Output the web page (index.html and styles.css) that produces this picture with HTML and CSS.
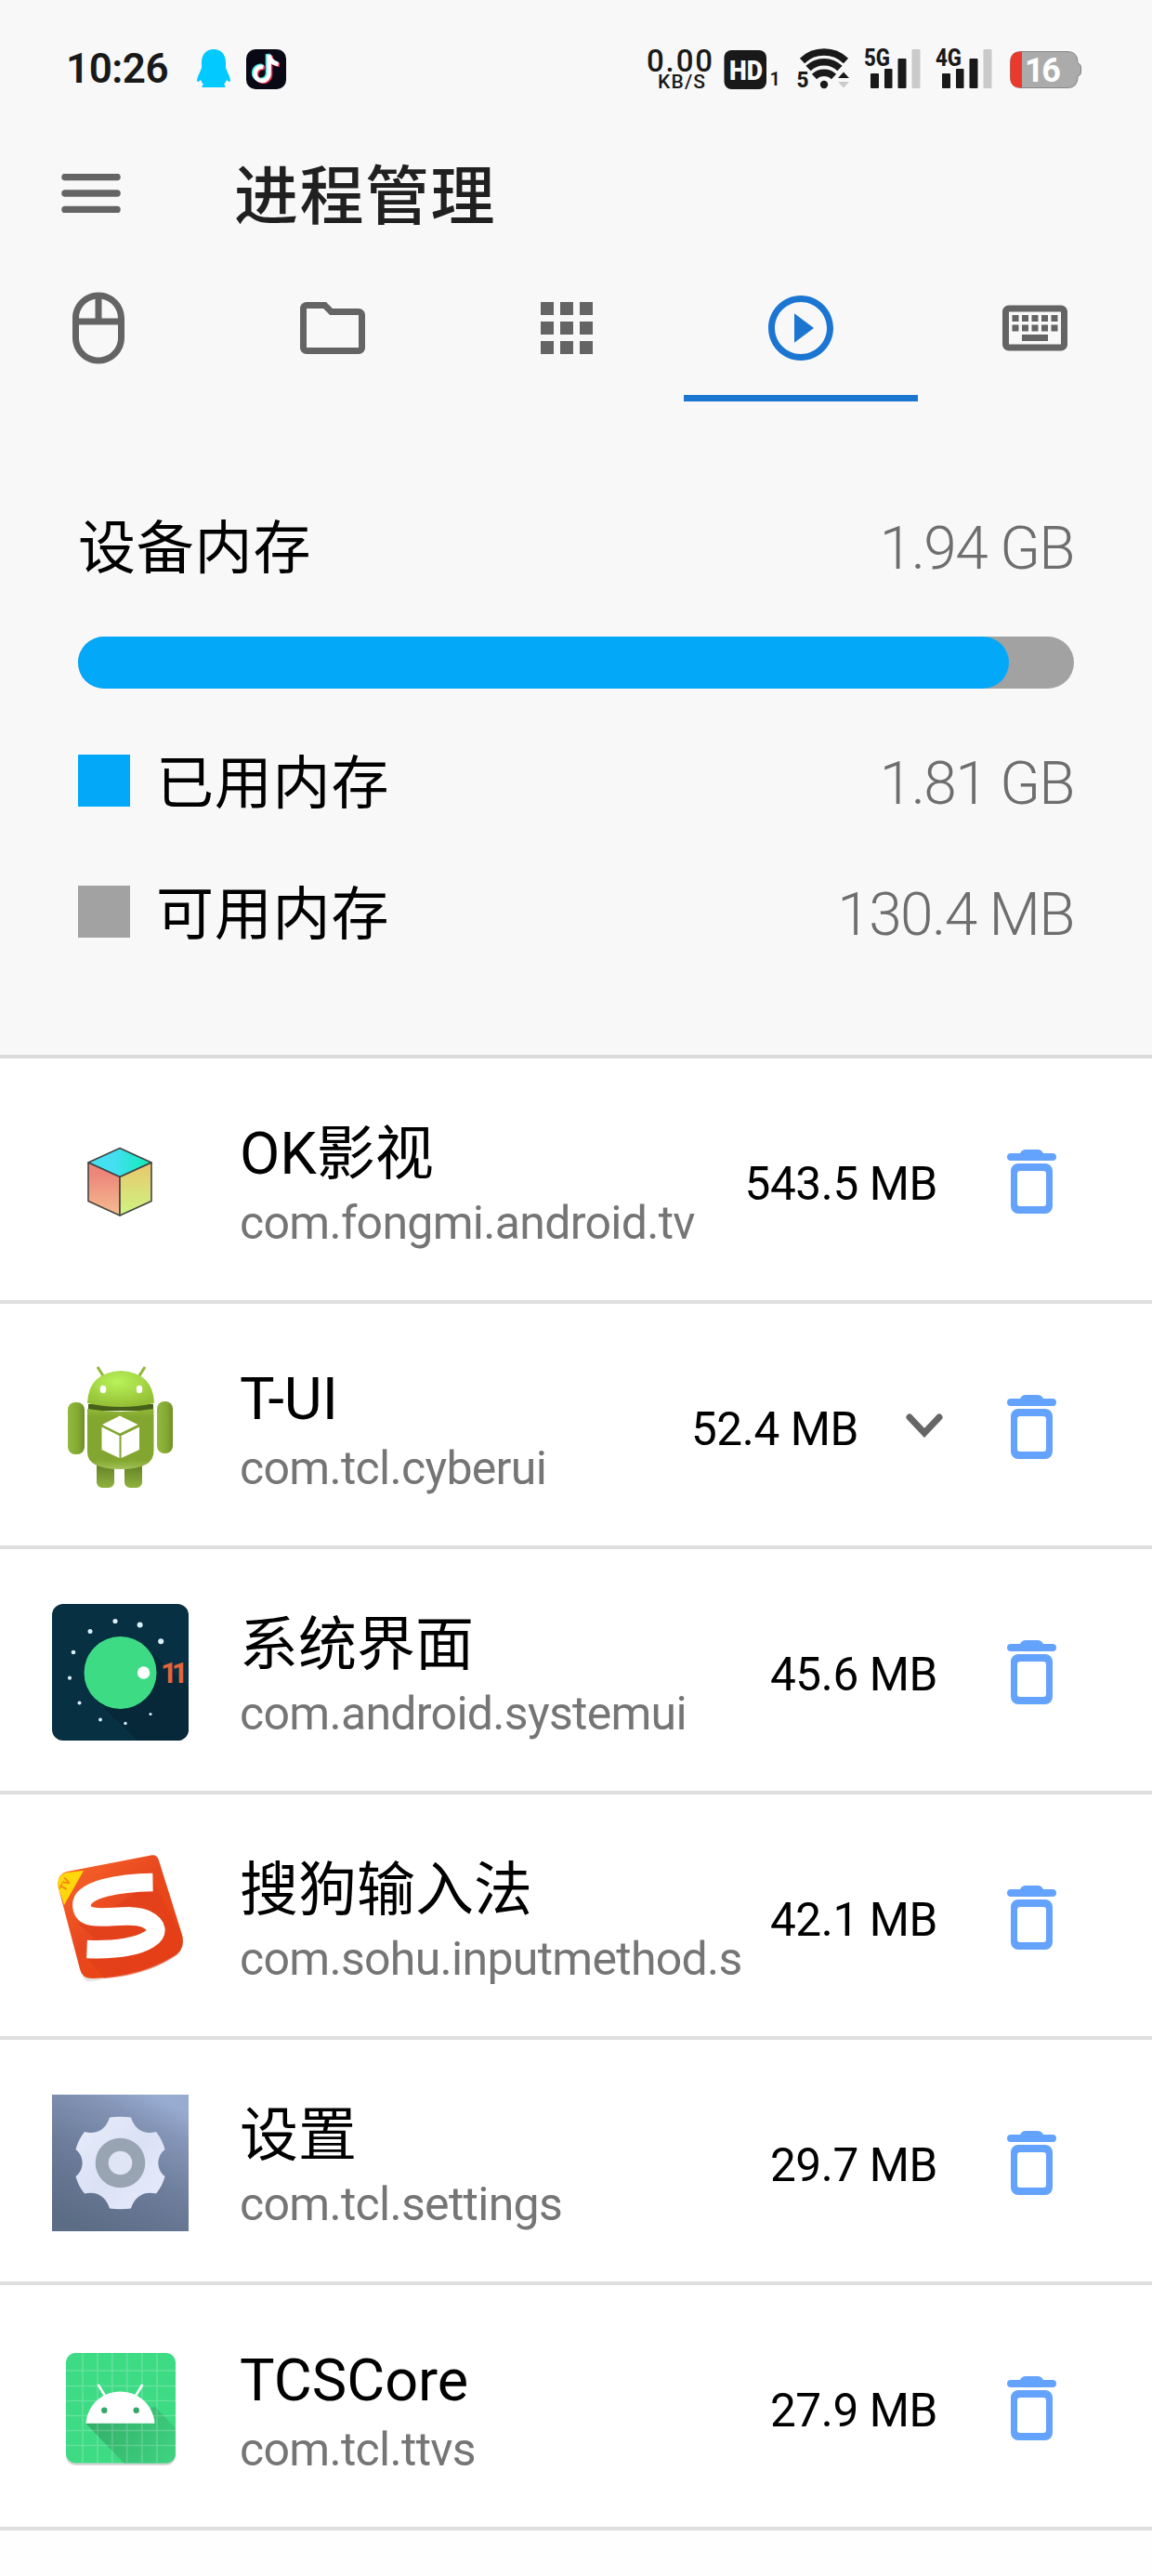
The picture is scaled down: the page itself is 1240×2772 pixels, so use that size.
FILE: index.html
```html
<!DOCTYPE html>
<html lang="zh-CN">
<head>
    <meta charset="UTF-8">
    <title>进程管理</title>

    <link rel="stylesheet" href="styles.css">
</head>

<body>
<svg class="defs" width="0" height="0">
    <symbol id="trash" viewBox="0 0 53 69">
        <path d="M4 4h10q2-4 6-4h13q4 0 6 4h10a4 4 0 0 1 0 8H4a4 4 0 0 1 0-8z"/>
        <path fill-rule="evenodd" d="M12 15h29a8 8 0 0 1 8 8v38a8 8 0 0 1-8 8H12a8 8 0 0 1-8-8V23a8 8 0 0 1 8-8zm2 8a3 3 0 0 0-3 3v32a3 3 0 0 0 3 3h25a3 3 0 0 0 3-3V26a3 3 0 0 0-3-3z"/>
    </symbol>
</svg>

<div class="status-bar">
    <div class="status-left">
        <span class="time">10:26</span>
        <svg class="qq" width="36" height="42" viewBox="0 0 36 42">
            <path fill="#02c9ff" d="M18 0c8 0 13 6 13 14v6l2 5c2 4 3 7 3 9-1 2-3 0-4-1-1 2-2 4-3 5 2 1 2 3 1 3H6c-1 0-1-2 1-3-1-1-2-3-3-5-1 1-3 3-4 1 0-2 1-5 3-9l2-5v-6C5 6 10 0 18 0z"/>
        </svg>
        <svg class="tiktok" width="43" height="43" viewBox="0 0 43 43">
            <rect width="43" height="43" rx="10" fill="#090915"/>
            <g fill="none" stroke-width="4.6">
                <path stroke="#3de0e0" d="M23 5v21a7.500 7.500 0 1 1-6-8M23 5c1 6 4 9 10 10"/>
                <path stroke="#f0355c" d="M26 7v21a7.500 7.500 0 1 1-6-8M26 7c1 6 4 9 10 10"/>
                <path stroke="#fff" d="M24.500 6v21a7.500 7.500 0 1 1-6-8M24.500 6c1 6 4 9 10 10"/>
            </g>
        </svg>
    </div>
    <svg class="status-right" width="470" height="60" viewBox="694 44 470 60">
        <g fill="#191919">
            <text x="696" y="77" font-size="33" font-weight="500" textLength="71">0.00</text>
            <text x="708" y="95" font-size="21" font-weight="500" textLength="51">KB/S</text>
            <rect x="779.500" y="54" width="45.500" height="42" rx="8"/>
            <text x="785" y="86" font-size="30" font-weight="900" fill="#f8f8f8" textLength="36" lengthAdjust="spacingAndGlyphs">HD</text>
            <text x="828.500" y="92" font-size="20" font-weight="600">1</text>
            <!-- wifi -->
            <g fill="none" stroke="#191919" stroke-width="7.500">
                <path d="M863.500 65.500a34 34 0 0 1 47 0"/>
                <path d="M870 73.500a24.500 24.500 0 0 1 34 0"/>
                <path d="M876.500 82.500a15 15 0 0 1 21 0"/>
            </g>
            <circle cx="887" cy="91" r="4.200"/>
            <text x="857.500" y="94" font-size="24" font-weight="800" textLength="13" lengthAdjust="spacingAndGlyphs">5</text>
            <path d="M902 84l6-6.500 6 6.500z"/>
            <path fill="#cacaca" d="M902 88l6 6.500 6-6.500z"/>
            <!-- sim 1 -->
            <text x="930" y="71" font-size="25.500" font-weight="800" textLength="28" lengthAdjust="spacingAndGlyphs">5G</text>
            <rect x="937" y="79" width="9" height="16" rx="1"/>
            <rect x="952" y="74" width="8.500" height="21" rx="1"/>
            <rect x="966.500" y="63" width="9" height="32" rx="1"/>
            <rect x="981.500" y="53" width="9" height="42" rx="1" fill="#cacaca"/>
            <!-- sim 2 -->
            <text x="1007" y="71" font-size="25.500" font-weight="800" textLength="28" lengthAdjust="spacingAndGlyphs">4G</text>
            <rect x="1014" y="79" width="9" height="16" rx="1"/>
            <rect x="1029" y="74" width="8.500" height="21" rx="1"/>
            <rect x="1043.500" y="63" width="9" height="32" rx="1"/>
            <rect x="1058.500" y="53" width="9" height="42" rx="1" fill="#cacaca"/>
        </g>
        <!-- battery -->
        <path fill="#ababab" stroke="#858585" d="M1099 55.500h50q10 0 11 10v2.500q3.500 1 3.500 4v6q0 3-3.500 4v2.500q-1 10-11 10h-50q-11.500 0-11.500-11.500v-16q0-11.500 11.500-11.500z"/>
        <path fill="#ea3a2d" d="M1100 55.500h-1q-11.500 0-11.500 11.500v16q0 11.500 11.500 11.500h1z"/>
        <text x="1103" y="88" font-size="36" font-weight="700" fill="#fff" textLength="39">16</text>
    </svg>
</div>

<div class="title-bar">
    <svg class="menu" width="64" height="42" viewBox="0 0 64 42">
        <path fill="none" stroke="#646464" stroke-width="7.500" stroke-linecap="round" d="M4 3.500h56M4 21h56M4 38.500h56"/>
    </svg>
    <h1>进程管理</h1>
</div>

<div class="tabs">
    <div class="tab">
        <svg viewBox="0 0 24 24"><path d="M12 1C7.580 1 4 4.580 4 9v6c0 4.420 3.580 8 8 8s8-3.580 8-8V9c0-4.420-3.580-8-8-8zm6 8h-5V3.100c2.800.5 5 2.900 5 5.900zm-7-5.900V9H6c0-3 2.200-5.400 5-5.900zM18 15c0 3.310-2.690 6-6 6s-6-2.690-6-6v-4h12z"/></svg>
    </div>
    <div class="tab">
        <svg viewBox="0 0 24 24"><path d="M9.170 6l2 2H20v10H4V6h5.170M10 4H4c-1.100 0-1.990.9-1.990 2L2 18c0 1.100.9 2 2 2h16c1.100 0 2-.9 2-2V8c0-1.100-.9-2-2-2h-8l-2-2z"/></svg>
    </div>
    <div class="tab">
        <svg viewBox="0 0 24 24"><path d="M4 8h4V4H4zm6 12h4v-4h-4zm-6 0h4v-4H4zm0-6h4v-4H4zm6 0h4v-4h-4zm6-10v4h4V4zm-6 4h4V4h-4zm6 6h4v-4h-4zm0 6h4v-4h-4z"/></svg>
    </div>
    <div class="tab active">
        <svg viewBox="0 0 24 24"><path d="M10 16.500l6-4.500-6-4.500zM12 2C6.480 2 2 6.480 2 12s4.480 10 10 10 10-4.480 10-10S17.520 2 12 2zm0 18c-4.410 0-8-3.590-8-8s3.590-8 8-8 8 3.590 8 8-3.590 8-8 8z"/></svg>
    </div>
    <div class="tab">
        <svg viewBox="0 0 24 24"><path d="M20 7v10H4V7h16m0-2H4c-1.100 0-2 .9-2 2v10c0 1.100.9 2 2 2h16c1.100 0 2-.9 2-2V7c0-1.100-.9-2-2-2zm-9 3h2v2h-2zm0 3h2v2h-2zM8 8h2v2H8zm0 3h2v2H8zm-3 0h2v2H5zm0-3h2v2H5zm3 6h8v2H8zm6-3h2v2h-2zm0-3h2v2h-2zm3 3h2v2h-2zm0-3h2v2h-2z"/></svg>
    </div>
</div>

<div class="memory">
    <div class="memory-row">
        <span class="label">设备内存</span>
        <span class="amount">1.94 GB</span>
    </div>
    <div class="bar"><div class="bar-used" style="width: 93.5%"></div></div>
    <div class="memory-row">
        <i class="swatch used"></i>
        <span class="label">已用内存</span>
        <span class="amount">1.81 GB</span>
    </div>
    <div class="memory-row">
        <i class="swatch free"></i>
        <span class="label">可用内存</span>
        <span class="amount">130.4 MB</span>
    </div>
</div>

<ul class="processes">
    <li>
        <svg class="app-icon" viewBox="0 0 147 147">
            <defs>
                <linearGradient id="cubeTop"><stop offset=".4" stop-color="#45dff2"/><stop offset=".9" stop-color="#16eac0"/></linearGradient>
                <linearGradient id="cubeLeft" x2="0" y2="1"><stop offset=".2" stop-color="#ec857a"/><stop offset="1" stop-color="#f5bd90"/></linearGradient>
                <linearGradient id="cubeRight" x2="0" y2="1"><stop offset="0" stop-color="#e8c66c"/><stop offset="1" stop-color="#cff582"/></linearGradient>
            </defs>
            <g stroke="#444" stroke-width="1.600" stroke-linejoin="round">
                <path fill="url(#cubeTop)" d="M73 37.500l34 15.500-34 15.500L39 53z"/>
                <path fill="url(#cubeLeft)" d="M39 53l34 15.500V110L39 94.500z"/>
                <path fill="url(#cubeRight)" d="M107 53L73 68.500V110l34-15.500z"/>
            </g>
        </svg>
        <div class="info">
            <div class="name">OK影视</div>
            <div class="package">com.fongmi.android.tv</div>
        </div>
        <span class="size">543.5 MB</span>
        <svg class="trash"><use href="#trash"/></svg>
    </li>
    <li>
        <svg class="app-icon" viewBox="0 0 147 147">
            <defs>
                <radialGradient id="botHead" cx=".45" cy=".3" r=".7"><stop offset="0" stop-color="#b9f35a"/><stop offset="1" stop-color="#94bf35"/></radialGradient>
                <linearGradient id="botBody" x2="0" y2="1"><stop offset="0" stop-color="#92b838"/><stop offset=".15" stop-color="#82a62f"/><stop offset=".85" stop-color="#82a62f"/><stop offset="1" stop-color="#a3c259"/></linearGradient>
                <linearGradient id="botArm"><stop offset="0" stop-color="#93b83f"/><stop offset=".6" stop-color="#83a932"/><stop offset="1" stop-color="#6f8f27"/></linearGradient>
                <linearGradient id="botLeg" x2="0" y2="1"><stop offset="0" stop-color="#5f7d22"/><stop offset="1" stop-color="#8fb23f"/></linearGradient>
            </defs>
            <path stroke="#8fb838" stroke-width="3" d="M49 9l7 11M100 9l-7 11"/>
            <path fill="url(#botLeg)" d="M48 112h19v21a6 6 0 0 1-6 6h-7a6 6 0 0 1-6-6zM78 112h19v21a6 6 0 0 1-6 6h-7a6 6 0 0 1-6-6z"/>
            <rect x="17" y="47" width="18" height="56" rx="8" fill="url(#botArm)"/>
            <rect x="113" y="46" width="17" height="56" rx="8" fill="url(#botArm)"/>
            <path fill="#46601a" d="M39 49h70v7H39z"/>
            <path fill="url(#botBody)" d="M38 54q36 6 71.500 0v46q0 19-36 19t-35.500-19z"/>
            <path fill="url(#botHead)" d="M38 48q1-33 36-35 35 2 36 35-36 8-72 0z"/>
            <ellipse cx="55" cy="33" rx="3.300" ry="4.300" fill="#fff"/>
            <ellipse cx="94" cy="33" rx="3.300" ry="4.300" fill="#fff"/>
            <g fill="#fff">
                <path d="M73 61.500L92.500 71 73 80.500 54 71z"/>
                <path d="M53.500 73.500L72.500 83v24l-19-9zM94 73.500L74.500 83v24L94 98z"/>
            </g>
        </svg>
        <div class="info">
            <div class="name">T-UI</div>
            <div class="package">com.tcl.cyberui</div>
        </div>
        <span class="size">52.4 MB</span>
        <svg class="chevron" width="40" height="26" viewBox="0 0 40 26"><path fill="none" stroke="#666" stroke-width="7" stroke-linecap="round" d="M4 4l16 17L36 4"/></svg>
        <svg class="trash"><use href="#trash"/></svg>
    </li>
    <li>
        <svg class="app-icon" viewBox="0 0 147 147">
            <rect width="147" height="147" rx="12" fill="#073042"/>
            <path fill="#062838" d="M46 102l46 45h43a12 12 0 0 0 12-12V89l-46-42z"/>
            <circle cx="73.500" cy="74" r="39" fill="#3ddc84"/>
            <circle cx="98.600" cy="74" r="6.700" fill="#fff"/>
            <g fill="#d9eff7">
                <circle cx="68" cy="18.500" r="2.600"/><circle cx="94.600" cy="22.500" r="3"/>
                <circle cx="117.200" cy="40.300" r="3"/><circle cx="41" cy="29.500" r="2.500"/>
                <circle cx="23" cy="52" r="2.300"/><circle cx="19" cy="79.700" r="2.100"/>
                <circle cx="29.500" cy="106.500" r="2"/><circle cx="52" cy="124.500" r="1.900"/>
                <circle cx="79" cy="128.500" r="1.700"/><circle cx="106" cy="118.500" r="1.600"/>
            </g>
            <text class="eleven" x="117" y="85">11</text>
        </svg>
        <div class="info">
            <div class="name">系统界面</div>
            <div class="package">com.android.systemui</div>
        </div>
        <span class="size">45.6 MB</span>
        <svg class="trash"><use href="#trash"/></svg>
    </li>
    <li>
        <svg class="app-icon" viewBox="0 0 147 147">
            <defs>
                <linearGradient id="sogou" x2="1" y2="1"><stop offset="0" stop-color="#fa6a2b"/><stop offset=".45" stop-color="#e8481f"/><stop offset="1" stop-color="#ee3f0b"/></linearGradient>
            </defs>
            <path fill="#000" opacity=".1" d="M31 132q2 12 14 10l60-14q34-9 36-28z"/>
            <path fill="url(#sogou)" d="M16 24l88-17q9-3 11 5l25 80q4 17-11 24-35 21-85 23-12 0-14-10L6.500 40Q5 27 16 24z"/>
            <path fill="#e03d1b" d="M28 80l46-22 34-25 7-21-7 21 32 60q4 17-11 24-30 19-73 22L37 116l21-9z" opacity=".6"/>
            <path fill="#ffd80c" d="M34 23L13 60 6.500 40Q5 27 16 25z"/>
            <text x="14" y="46" font-size="11" font-weight="900" fill="#f28a12" transform="rotate(-62 14 46)">TV</text>
            <path fill="none" stroke="#fff" stroke-width="19.500" d="M108.500 35.500C76 36 29 42 32 62 35 84 80 65 101 75 128 88 104 110 37.500 107.500"/>
        </svg>
        <div class="info">
            <div class="name">搜狗输入法</div>
            <div class="package">com.sohu.inputmethod.s</div>
        </div>
        <span class="size">42.1 MB</span>
        <svg class="trash"><use href="#trash"/></svg>
    </li>
    <li>
        <svg class="app-icon" viewBox="0 0 147 147">
            <defs>
                <linearGradient id="setBg" x1=".25" y1="1" x2=".75" y2="0"><stop offset="0" stop-color="#5b6c85"/><stop offset=".45" stop-color="#6c7c9a"/><stop offset=".8" stop-color="#8394b6"/><stop offset="1" stop-color="#98acd2"/></linearGradient>
                <linearGradient id="gear" x2="1" y2="1"><stop offset="0" stop-color="#e9edfb"/><stop offset=".5" stop-color="#dbe1f5"/><stop offset="1" stop-color="#e8ecfc"/></linearGradient>
            </defs>
            <rect width="147" height="147" fill="url(#setBg)"/>
            <path fill="url(#gear)" d="M62 24.500q11.500-1.500 23 0C88 35 97 44 112 40q7 9 9.500 19C112 66 112 81 121.500 88q-2.500 10-9.500 18.500C97 103 88 112 85 122.500q-11.500 1.500-23 0C59 112 50 103 35 106.500 28 98 25.500 88 25.500 88 35 81 35 66 25.500 59Q28 49 35 40C50 44 59 35 62 24.500z"/>
            <circle cx="73.500" cy="73.500" r="26.800" fill="#98a4b1"/>
            <circle cx="73.500" cy="73.500" r="12.800" fill="#dfe5f4"/>
        </svg>
        <div class="info">
            <div class="name">设置</div>
            <div class="package">com.tcl.settings</div>
        </div>
        <span class="size">29.7 MB</span>
        <svg class="trash"><use href="#trash"/></svg>
    </li>
    <li>
        <svg class="app-icon" viewBox="0 0 147 147">
            <defs>
                <linearGradient id="headShadow" gradientUnits="userSpaceOnUse" x1="50" y1="80" x2="120" y2="135"><stop offset="0" stop-color="#34ae69"/><stop offset="1" stop-color="#3dd180"/></linearGradient>
            </defs>
            <rect x="15" y="17" width="118" height="118" rx="10" fill="#000" opacity=".16"/>
            <rect x="15" y="14" width="118" height="118.500" rx="10" fill="#3ddb84"/>
            <path fill="url(#headShadow)" d="M36.500 90l41 42.500H123a10 10 0 0 0 10-10V95l-22-23z"/>
            <path stroke="#fff" stroke-opacity=".2" stroke-width="1.600" d="M33 14v118M49 14v118M64.800 14v118M80.700 14v118M96.800 14v118M113 14v118M15 33h118M15 49.500h118M15 65.500h118M15 81.500h118M15 97.500h118M15 113.500h118"/>
            <path stroke="#fff" stroke-width="2.500" d="M49.600 48l8 13M97.400 48l-8 13"/>
            <path fill="#fff" d="M36.500 89.700C38 70 54 55.500 73.500 55.500s35.500 14.500 37 34.200z"/>
            <circle cx="56.300" cy="75.700" r="3.200" fill="#34a869"/>
            <circle cx="90.700" cy="75.700" r="3.200" fill="#34a869"/>
        </svg>
        <div class="info">
            <div class="name">TCSCore</div>
            <div class="package">com.tcl.ttvs</div>
        </div>
        <span class="size">27.9 MB</span>
        <svg class="trash"><use href="#trash"/></svg>
    </li>
</ul>
</body>

</html>
```
FILE: styles.css
```css
* {
    box-sizing: border-box;
}

body {
    margin: 0;
    width: 1240px;
    height: 2772px;
    overflow: hidden;
    background: #fefefe;
    font-family: Roboto, "Noto Sans CJK SC", sans-serif;
    color: #000;
}
svg {
    display: block;
    flex-shrink: 0;
}
.defs {
    position: absolute;
}

/* status bar */
.status-bar {
    display: flex;
    justify-content: space-between;
    align-items: center;
    height: 148px;
    padding: 0 76px 0 71px;
    background: #f8f8f8;
}
.status-left {
    display: flex;
    align-items: center;
}
.time {
    width: 141px;
    font-size: 44px;
    font-weight: 600;
    line-height: 54px;
    letter-spacing: -0.5px;
    color: #191919;
}
.status-left .tiktok {
    margin-left: 17px;
}
.status-right {
    overflow: visible;
}

.title-bar {
    display: flex;
    align-items: center;
    height: 126px;
    padding: 0 66px 6px;
    background: #f8f8f8;
}
.title-bar h1 {
    margin: 10px 0 0 122px;
    font-size: 69px;
    font-weight: 500;
    line-height: 90px;
    letter-spacing: 1.5px;
    color: #202020;
}

/* the tab strip is scrolled to its end, so the first tab is cut off */
.tabs {
    display: flex;
    width: 1260px;
    height: 158px;
    margin-left: -20px;
    background: #f8f8f8;
}
.tab {
    display: flex;
    justify-content: center;
    align-items: center;
    width: 252px;
    border-bottom: 7px solid transparent;
    padding-top: 7px;
}
.tab svg {
    width: 84px;
    height: 84px;
    fill: #646464;
}
.tab.active {
    border-color: #1b76d2;
}
.tab.active svg {
    fill: #1b76d2;
}

/* memory */
.memory {
    height: 707px;
    padding: 118px 84px 0;
    background: #f8f8f8;
    border-bottom: 4px solid #dadada;
}
.memory-row {
    display: flex;
    height: 80px;
    margin-bottom: 61px;
    font-size: 62px;
    line-height: 82px;
}
.memory-row .label {
    letter-spacing: 0.8px;
}
.memory-row .amount {
    margin-left: auto;
    font-size: 64px;
    font-weight: 300;
    letter-spacing: -1.6px;
    color: #6e6e6e;
}
.bar {
    height: 56px;
    margin: -6px 0 62px;
    border-radius: 28px;
    background: #a2a2a2;
}
.bar-used {
    height: 100%;
    border-radius: 28px;
    background: #03a9f8;
}
.swatch {
    width: 56px;
    height: 56px;
    margin: 9px 28px 0 0;
}
.swatch.used {
    background: #03a9f8;
}
.swatch.free {
    background: #a2a2a2;
}

/* process list */
.processes {
    margin: 0;
    padding: 0;
    list-style: none;
}
.processes li {
    display: flex;
    align-items: center;
    height: 264px;
    padding: 0 103px 0 56px;
    background: #fff;
    border-bottom: 4px solid #dfdfdf;
}
.app-icon {
    width: 147px;
    height: 147px;
    margin-top: 5px;
}
.eleven {
    font-size: 31px;
    font-weight: 700;
    letter-spacing: -6px;
    fill: #e4643b;
}
.info {
    flex: 1;
    align-self: flex-start;
    min-width: 0;
    padding: 65px 0 0 55px;
    white-space: nowrap;
}
.name {
    font-size: 63px;
    line-height: 76px;
}
.package {
    margin-top: 6px;
    font-size: 50px;
    line-height: 60px;
    letter-spacing: -0.7px;
    color: #757575;
}
.size {
    padding-top: 9px;
    font-size: 49.5px;
    line-height: 60px;
    letter-spacing: -0.4px;
    white-space: nowrap;
}
.chevron {
    margin: 1px 0 0 51px;
}
.trash {
    width: 53px;
    height: 69px;
    margin: 5px 0 0 75px;
    fill: #64a3fd;
}
.chevron + .trash {
    margin-left: 69px;
}
```
